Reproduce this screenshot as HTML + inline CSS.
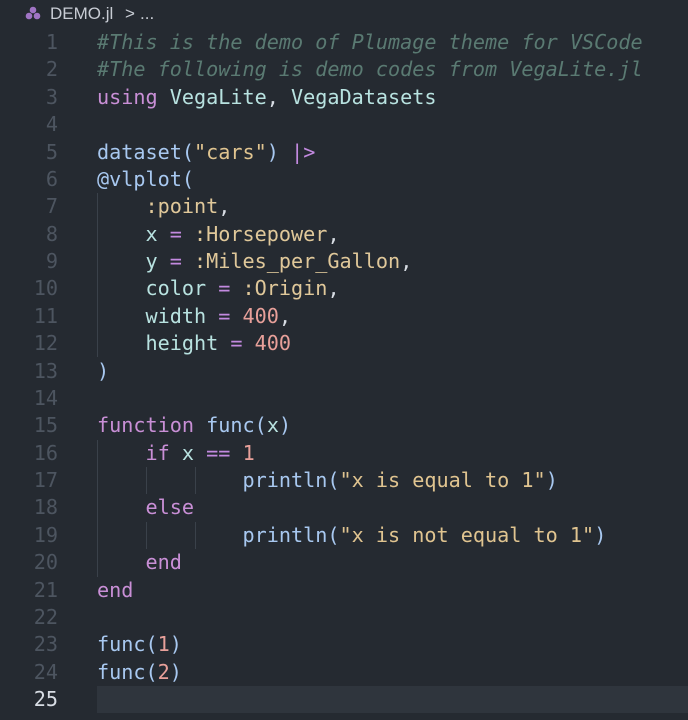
<!DOCTYPE html>
<html><head><meta charset="utf-8"><style>
html,body{margin:0;padding:0;background:#252a31;width:688px;height:720px;overflow:hidden}
.bc{position:absolute;left:0;top:0;height:28px;font:17px "Liberation Sans","DejaVu Sans",sans-serif;color:#c8ccd4;}
.bc span{position:absolute;top:4px;white-space:nowrap}
.ed{position:absolute;left:0;top:29px;width:688px;font-family:"DejaVu Sans Mono","Liberation Mono",monospace;font-size:20.15px;}
.l{position:relative;height:27.38px;line-height:27.38px;white-space:pre;}
.n{position:absolute;left:0;width:58px;text-align:right;color:#4d5560}
.c{position:absolute;left:97px;color:#b8e2e0}
.cur{background:#2f353d}
.cm{color:#5a7a72;font-style:italic}
.k{color:#c98fd6}.f{color:#a8c8f0}.s{color:#e0c490}.y{color:#e0c89a}.num{color:#e8a09a}.o{color:#c38ae0}.p{color:#a8c8f0}.w{color:#d8dde4}
.g{position:absolute;width:1px;background:#3a414a}
</style></head><body>
<div class="bc">
<svg style="position:absolute;left:25px;top:6px" width="16" height="14" viewBox="0 0 16 14"><circle cx="8" cy="4" r="3.3" fill="#a074c4"/><circle cx="4" cy="10" r="3.3" fill="#a074c4"/><circle cx="12" cy="10" r="3.3" fill="#a074c4"/></svg>
<span style="left:50px">DEMO.jl</span><span style="left:125px">&gt;</span><span style="left:140px">...</span>
</div>
<div class="ed">
<div class="l"><span class="n">1</span><span class="c cm">#This is the demo of Plumage theme for VSCode</span></div>
<div class="l"><span class="n">2</span><span class="c cm">#The following is demo codes from VegaLite.jl</span></div>
<div class="l"><span class="n">3</span><span class="c"><span class="k">using</span> VegaLite<span class="w">,</span> VegaDatasets</span></div>
<div class="l"><span class="n">4</span></div>
<div class="l"><span class="n">5</span><span class="c"><span class="f">dataset</span><span class="p">(</span><span class="s">"cars"</span><span class="p">)</span> <span class="o">|&gt;</span></span></div>
<div class="l"><span class="n">6</span><span class="c"><span class="f">@vlplot</span><span class="p">(</span></span></div>
<div class="l"><span class="n">7</span><span class="c">    <span class="y">:point</span><span class="w">,</span></span></div>
<div class="l"><span class="n">8</span><span class="c">    x <span class="o">=</span> <span class="y">:Horsepower</span><span class="w">,</span></span></div>
<div class="l"><span class="n">9</span><span class="c">    y <span class="o">=</span> <span class="y">:Miles_per_Gallon</span><span class="w">,</span></span></div>
<div class="l"><span class="n">10</span><span class="c">    color <span class="o">=</span> <span class="y">:Origin</span><span class="w">,</span></span></div>
<div class="l"><span class="n">11</span><span class="c">    width <span class="o">=</span> <span class="num">400</span><span class="w">,</span></span></div>
<div class="l"><span class="n">12</span><span class="c">    height <span class="o">=</span> <span class="num">400</span></span></div>
<div class="l"><span class="n">13</span><span class="c"><span class="p">)</span></span></div>
<div class="l"><span class="n">14</span></div>
<div class="l"><span class="n">15</span><span class="c"><span class="k">function</span> <span class="f">func</span><span class="p">(</span>x<span class="p">)</span></span></div>
<div class="l"><span class="n">16</span><span class="c">    <span class="k">if</span> x <span class="o">==</span> <span class="num">1</span></span></div>
<div class="l"><span class="n">17</span><span class="c">            <span class="f">println</span><span class="p">(</span><span class="s">"x is equal to 1"</span><span class="p">)</span></span></div>
<div class="l"><span class="n">18</span><span class="c">    <span class="k">else</span></span></div>
<div class="l"><span class="n">19</span><span class="c">            <span class="f">println</span><span class="p">(</span><span class="s">"x is not equal to 1"</span><span class="p">)</span></span></div>
<div class="l"><span class="n">20</span><span class="c">    <span class="k">end</span></span></div>
<div class="l"><span class="n">21</span><span class="c"><span class="k">end</span></span></div>
<div class="l"><span class="n">22</span></div>
<div class="l"><span class="n">23</span><span class="c"><span class="f">func</span><span class="p">(</span><span class="num">1</span><span class="p">)</span></span></div>
<div class="l"><span class="n">24</span><span class="c"><span class="f">func</span><span class="p">(</span><span class="num">2</span><span class="p">)</span></span></div>
<div class="l"><span class="n" style="color:#d8dde4">25</span><div class="cur" style="position:absolute;left:97px;right:0;top:0;bottom:0"></div></div>
<div class="g" style="left:97px;top:164px;height:164px"></div>
<div class="g" style="left:97px;top:411px;height:137px"></div>
<div class="g" style="left:146px;top:438px;height:27px"></div>
<div class="g" style="left:195px;top:438px;height:27px"></div>
<div class="g" style="left:146px;top:493px;height:27px"></div>
<div class="g" style="left:195px;top:493px;height:27px"></div>
</div>
</body></html>
